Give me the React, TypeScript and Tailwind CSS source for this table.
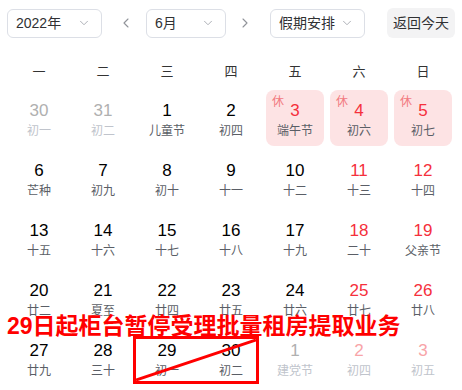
import { ChevronDown, ChevronLeft, ChevronRight } from "lucide-react";

type Day = {
  n: number;
  l: string;
  kind?: "off" | "weekend" | "other" | "otherWeekend";
  rest?: boolean;
};

const weeks: Day[][] = [
  [
    { n: 30, l: "初一", kind: "other" },
    { n: 31, l: "初二", kind: "other" },
    { n: 1, l: "儿童节" },
    { n: 2, l: "初四" },
    { n: 3, l: "端午节", kind: "weekend", rest: true },
    { n: 4, l: "初六", kind: "weekend", rest: true },
    { n: 5, l: "初七", kind: "weekend", rest: true },
  ],
  [
    { n: 6, l: "芒种" },
    { n: 7, l: "初九" },
    { n: 8, l: "初十" },
    { n: 9, l: "十一" },
    { n: 10, l: "十二" },
    { n: 11, l: "十三", kind: "weekend" },
    { n: 12, l: "十四", kind: "weekend" },
  ],
  [
    { n: 13, l: "十五" },
    { n: 14, l: "十六" },
    { n: 15, l: "十七" },
    { n: 16, l: "十八" },
    { n: 17, l: "十九" },
    { n: 18, l: "二十", kind: "weekend" },
    { n: 19, l: "父亲节", kind: "weekend" },
  ],
  [
    { n: 20, l: "廿二" },
    { n: 21, l: "夏至" },
    { n: 22, l: "廿四" },
    { n: 23, l: "廿五" },
    { n: 24, l: "廿六" },
    { n: 25, l: "廿七", kind: "weekend" },
    { n: 26, l: "廿八", kind: "weekend" },
  ],
  [
    { n: 27, l: "廿九" },
    { n: 28, l: "三十" },
    { n: 29, l: "初一" },
    { n: 30, l: "初二" },
    { n: 1, l: "建党节", kind: "other" },
    { n: 2, l: "初四", kind: "otherWeekend" },
    { n: 3, l: "初五", kind: "otherWeekend" },
  ],
];

const weekdays = ["一", "二", "三", "四", "五", "六", "日"];

function Select({ label, width }: { label: string; width: string }) {
  return (
    <div className={`${width} h-[29px] px-2 border border-[#dcdfe6] rounded-md flex items-center justify-between`}>
      <span className="text-[14px] text-[#303133]">{label}</span>
      <ChevronDown size={14} strokeWidth={1.6} className="text-[#a8abb2] mr-[2px]" />
    </div>
  );
}

function Cell({ d }: { d: Day }) {
  const numColor =
    d.kind === "weekend"
      ? "text-[#f5303c]"
      : d.kind === "other"
        ? "text-[#b0b0b0]"
        : d.kind === "otherWeekend"
          ? "text-[#f8a4a8]"
          : "text-black";
  const lunarColor =
    d.kind === "other" || d.kind === "otherWeekend" ? "text-[#c0c4cc]" : "text-[#5a5e66]";
  return (
    <div className={`relative h-[56px] mx-[3px] rounded-lg flex flex-col items-center pt-[11px] ${d.rest ? "bg-[#fde3e4]" : ""}`}>
      {d.rest && (
        <span className="absolute left-[6px] top-[4px] text-[12px] leading-4 text-[#f27a80]">休</span>
      )}
      <span className={`h-5 leading-5 text-[17px] ${numColor}`}>{d.n}</span>
      <span className={`mt-[2px] h-4 leading-4 text-[12px] ${lunarColor}`}>{d.l}</span>
    </div>
  );
}

export default function App() {
  return (
    <div
      className="relative w-[462px] h-[390px] bg-white overflow-hidden"
      style={{ fontFamily: '"Liberation Sans", "Noto Sans CJK SC", sans-serif' }}
    >
      <div className="mt-[8px] px-[7px] h-[30px] flex items-center">
        <Select label="2022年" width="w-[95px]" />
        <ChevronLeft size={16} strokeWidth={1.6} className="ml-[16px] text-[#909399]" />
        <div className="ml-[12px]">
          <Select label="6月" width="w-[80px]" />
        </div>
        <ChevronRight size={16} strokeWidth={1.6} className="ml-[11px] text-[#909399]" />
        <div className="ml-[17px]">
          <Select label="假期安排" width="w-[95px]" />
        </div>
        <button className="ml-auto w-[68px] h-[30px] rounded-md bg-[#f3f3f4] text-[14px] text-[#303133]">
          返回今天
        </button>
      </div>

      <div className="mt-[22px] ml-[7px] w-[448px] h-[24px] grid grid-cols-7 items-center">
        {weekdays.map((w) => (
          <span key={w} className="text-center text-[13px] text-[#333]">
            {w}
          </span>
        ))}
      </div>

      <div className="mt-[6px] ml-[7px] w-[448px] flex flex-col gap-y-[4px]">
        {weeks.map((row, i) => (
          <div key={i} className="grid grid-cols-7">
            {row.map((d, j) => (
              <Cell key={j} d={d} />
            ))}
          </div>
        ))}
      </div>

      <div className="absolute left-[7px] top-[313px] text-[23px] leading-[26px] font-bold text-[#ff0000] whitespace-nowrap">
        29日起柜台暂停受理批量租房提取业务
      </div>

      <div className="absolute left-[133px] top-[336px] w-[126px] h-[48px] border-[3px] border-[#ff0000]">
        <svg width="120" height="42" className="absolute left-0 top-0">
          <line x1="0" y1="41" x2="120" y2="1" stroke="#ff0000" strokeWidth="3" />
        </svg>
      </div>
    </div>
  );
}
